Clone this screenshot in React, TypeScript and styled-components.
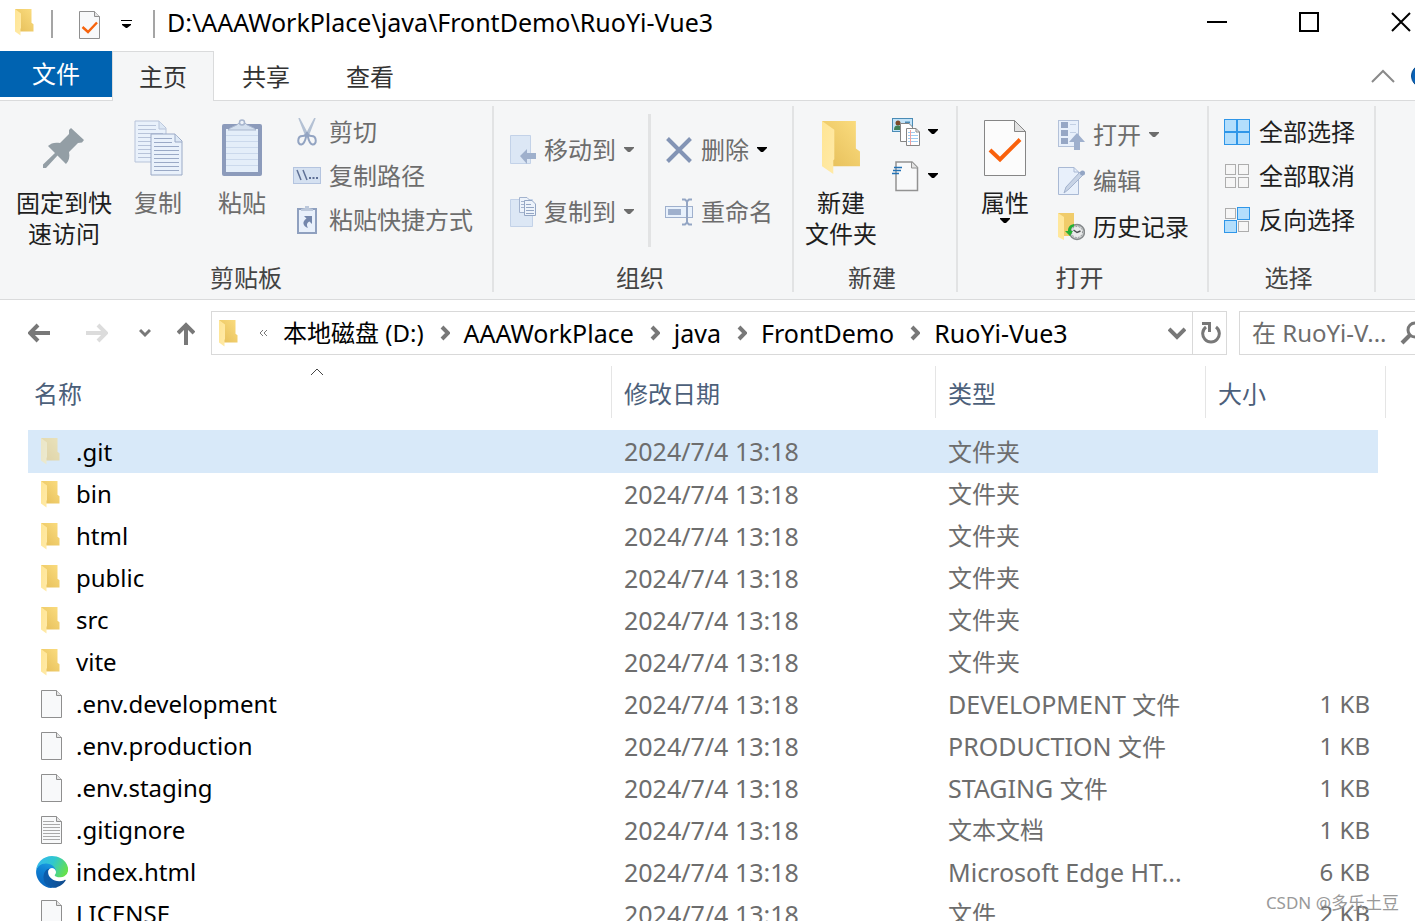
import React from 'react';
import styled, { createGlobalStyle } from 'styled-components';

const GlobalStyle = createGlobalStyle`
  * { box-sizing: border-box; }
  body {
    margin: 0;
    background: #fff;
    color: #000;
    font: 24px/32px 'Noto Sans', 'Noto Sans CJK SC', sans-serif;
  }
  button, input { font: inherit; color: inherit; }
`;

const Viewport = styled.div`
  position: relative;
  height: 100vh;
  overflow: hidden;
`;

/* The window runs a little past the right edge of the screen. */
const Window = styled.div`
  display: flex;
  flex-direction: column;
  margin-right: -32px;
`;

const PlainButton = styled.button`
  display: flex;
  align-items: center;
  padding: 0;
  border: 0;
  background: none;
  white-space: nowrap;
`;

/* Latin words are set one size larger than the Chinese text. */
const Latin = styled.span`
  font-size: 25px;
  line-height: 32px;
  white-space: pre;
`;

/* ---------- title bar ---------- */
const TitleBar = styled.header`
  display: flex;
  align-items: center;
  height: 51px;
  padding: 0 0 7px 15px;
`;
const TitleRule = styled.span`
  width: 2px;
  height: 28px;
  margin: 4px 12px 0 17px;
  background: #a5a5a5;
`;
const QuickButton = styled(PlainButton)`
  margin: 6px 0 0 14px;
`;
const QuickMenu = styled(PlainButton)`
  margin: 5px 4px 0 20px;
`;
const Title = styled.h1`
  flex: 1;
  margin: 0;
  font-size: 25px;
  font-weight: 400;
`;
const WindowButton = styled(PlainButton)`
  justify-content: center;
  width: 92px;
  height: 44px;
`;

/* ---------- tabs ---------- */
const TabBar = styled.nav`
  display: flex;
  height: 50px;
  border-bottom: 1px solid #dadbdc;
`;
const FileTab = styled(PlainButton)`
  justify-content: center;
  width: 112px;
  height: 46px;
  background: #0063b1;
  color: #fff;
`;
const Tab = styled(PlainButton)<{ $active?: boolean }>`
  justify-content: center;
  width: ${(p) => (p.$active ? 102 : 104)}px;
  height: 50px;
  border: solid ${(p) => (p.$active ? '#dadbdc' : 'transparent')};
  border-width: 1px 1px 0;
  background: ${(p) => (p.$active ? '#f5f6f7' : 'none')};
  color: #333;
`;
const TabTools = styled.div`
  display: flex;
  align-items: center;
  gap: 16px;
  margin-left: auto;
  padding-right: 12px;
`;

/* ---------- ribbon ---------- */
const Ribbon = styled.section`
  display: flex;
  height: 199px;
  padding: 5px 0 7px 6px;
  background: #f5f6f7;
  border-bottom: 1px solid #dadbdc;
`;
const Group = styled.div<{ $width: number }>`
  display: grid;
  grid-template-rows: 1fr 28px;
  width: ${(p) => p.$width}px;
  border-right: 2px solid #e2e3e4;
`;
const GroupBody = styled.div`
  display: flex;
  align-items: flex-start;
`;
const GroupLabel = styled.div`
  padding-right: 6px;
  line-height: 28px;
  text-align: center;
  color: #444;
`;
const LargeButton = styled(PlainButton)<{ $width: number; $muted?: boolean }>`
  flex-direction: column;
  width: ${(p) => p.$width}px;
  padding-top: 14px;
  line-height: 31px;
  color: ${(p) => (p.$muted ? '#6d6d6d' : '#1e1e1e')};
`;
const LargeIcon = styled.span`
  display: flex;
  align-items: center;
  justify-content: center;
  height: 56px;
  margin-bottom: 11px;
`;
const Column = styled.div<{ $left: number; $top: number }>`
  display: flex;
  flex-direction: column;
  padding: ${(p) => p.$top}px 0 0 ${(p) => p.$left}px;
`;
const SmallButton = styled(PlainButton)<{ $height: number; $muted?: boolean }>`
  gap: 8px;
  height: ${(p) => p.$height}px;
  color: ${(p) => (p.$muted ? '#6d6d6d' : '#1e1e1e')};
`;
const SmallIcon = styled.span`
  display: flex;
  align-items: center;
  justify-content: center;
  width: 28px;
`;
const InnerRule = styled.span`
  width: 3px;
  height: 133px;
  margin: 8px 0 0 14px;
  background: #e2e3e4;
`;

/* ---------- address row ---------- */
const AddressRow = styled.div`
  display: flex;
  align-items: center;
  padding: 11px 0 11px 28px;
`;
const NavButtons = styled.div`
  display: flex;
  align-items: center;
  width: 183px;
`;
const NavButton = styled(PlainButton)<{ $gap: number }>`
  margin-right: ${(p) => p.$gap}px;
`;
const AddressBox = styled.div`
  display: flex;
  flex: 1;
  align-items: center;
  height: 44px;
  padding-left: 7px;
  border: 1px solid #d9d9d9;
`;
const Overflow = styled(PlainButton)`
  margin: 0 15px 0 21px;
`;
const Crumb = styled(PlainButton)`
  color: #000;
`;
const CrumbArrow = styled.span`
  display: flex;
  margin: 0 14px 0 16px;
`;
const DropButton = styled(PlainButton)`
  margin: 0 6px 0 auto;
`;
const Refresh = styled(PlainButton)`
  justify-content: center;
  width: 34px;
  height: 42px;
  padding-left: 2px;
  border-left: 1px solid #d9d9d9;
`;
const SearchBox = styled.label`
  display: flex;
  align-items: center;
  width: 208px;
  height: 44px;
  margin-left: 12px;
  padding-left: 12px;
  border: 1px solid #d9d9d9;
  color: #6d6d6d;
`;
const SearchInput = styled.input`
  width: 148px;
  padding: 0;
  border: 0;
  outline: 0;
  background: none;
  &::placeholder { color: #6d6d6d; opacity: 1; }
`;

/* ---------- file list ---------- */
const FileTable = styled.table`
  table-layout: fixed;
  width: 1358px;
  margin-left: 28px;
  border-spacing: 0;
  tbody::before { content: ''; display: block; height: 12px; }
`;
const HeadCell = styled.th<{ $left: number }>`
  position: relative;
  height: 52px;
  padding: 3px 0 0 ${(p) => p.$left}px;
  border-right: 1px solid #e5e5e5;
  color: #4c607a;
  font-weight: 400;
  text-align: left;
`;
const SortMark = styled.span`
  position: absolute;
  top: 2px;
  left: 50%;
  display: flex;
  margin-left: -10px;
`;
const Row = styled.tr<{ $selected?: boolean }>`
  height: ${(p) => (p.$selected ? 43 : 42)}px;
  td { background: ${(p) => (p.$selected ? '#d8e9f9' : 'none')}; background-clip: padding-box; }
`;
const Cell = styled.td`
  padding: 0 0 0 12px;
  color: #6d6d6d;
  white-space: nowrap;
`;
const SizeCell = styled(Cell)`
  padding-right: 8px;
  border-right: 8px solid transparent;
  text-align: right;
`;
const NameCell = styled(Cell)`
  padding-left: 8px;
  color: #000;
`;
const FileName = styled.div`
  display: flex;
  align-items: center;
  gap: 8px;
`;
const FileIcon = styled.span<{ $faded?: boolean }>`
  display: flex;
  width: 32px;
  height: 32px;
  align-items: center;
  opacity: ${(p) => (p.$faded ? 0.5 : 1)};
`;
const IconInset = styled.span`
  display: flex;
  margin-left: 5px;
`;
const Watermark = styled.div`
  position: absolute;
  right: 16px;
  bottom: 6px;
  font-size: 17px;
  line-height: 24px;
  color: #999;
`;

/* ---------- drawings ---------- */
const Folder = ({ w, h }: { w: number; h: number }) => (
  <svg width={w} height={h} viewBox="0 0 38 55" preserveAspectRatio="none">
    <defs>
      <linearGradient id="folderBack" x1="0" y1="1" x2="1" y2="0">
        <stop offset="0.2" stopColor="#e9c35f" />
        <stop offset="1" stopColor="#fbdd80" />
      </linearGradient>
      <linearGradient id="folderFlap" x1="0" y1="0" x2="1" y2="1">
        <stop offset="0" stopColor="#ffe594" />
        <stop offset="1" stopColor="#ffeaa8" />
      </linearGradient>
    </defs>
    <path d="M0 0H33V28L37 31V46H8Z" fill="url(#folderBack)" />
    <path d="M0 0L12 9V39L11 40V54L0 46Z" fill="url(#folderFlap)" />
  </svg>
);

const Page = ({ check, lines }: { check?: boolean; lines?: boolean }) => (
  <svg width="22" height="29" viewBox="0 0 22 29" fill="none">
    <path d="M.5 .5H15.500L20.500 5.500V27.500H.5Z" fill="#f8f9fa" stroke="#8f8f8f" />
    <path d="M15.500 .5V5.500H20.500" fill="#e4e4e4" stroke="#8f8f8f" />
    {check && <path d="M3.500 16L9 21L18 11.500" stroke="#f7630c" strokeWidth="2.400" />}
    {lines && <path d="M2 5.500H13M2 8.500H19M2 11.500H19M2 14.500H19M2 17.500H19M2 20.500H19M2 23.500H19" stroke="#a9a9a9" />}
  </svg>
);

const Edge = () => (
  <svg width="32" height="32" viewBox="0 0 256 256">
    <defs>
      <linearGradient id="edgeDark" x1="0.2" y1="0.6" x2="1" y2="0.7">
        <stop offset="0" stopColor="#0c5cab" />
        <stop offset="1" stopColor="#114a8b" />
      </linearGradient>
      <linearGradient id="edgeBlue" x1="0.6" y1="0" x2="0.3" y2="1">
        <stop offset="0" stopColor="#1b9de2" />
        <stop offset="0.4" stopColor="#0e7fd2" />
        <stop offset="1" stopColor="#0a63bd" />
      </linearGradient>
      <linearGradient id="edgeGreen" x1="0" y1="0.2" x2="1" y2="0.55">
        <stop offset="0" stopColor="#35b8f0" />
        <stop offset="0.5" stopColor="#30c7cf" />
        <stop offset="1" stopColor="#66e14c" />
      </linearGradient>
    </defs>
    <g transform="translate(-4 -5)">
      <path fill="url(#edgeBlue)" d="M110.300 246.300A79.200 79.200 0 0 1 87.600 225a80.700 80.700 0 0 1 29.500-120c3.100-1.500 8.400-4.100 15.500-4a32.400 32.400 0 0 1 25.700 13 31.900 31.900 0 0 1 6.300 18.700c0-.2 24.500-79.600-80-79.600-43.900 0-80 41.700-80 78.200 0 19.300 4.500 38.500 13.100 56.100a128 128 0 0 0 156.400 67 75.500 75.500 0 0 1-62.800-8z" />
      <path fill="url(#edgeDark)" d="M235.700 195.500c-3.400 1.800-6.900 3.400-10.500 4.700a101.600 101.600 0 0 1-35.900 6.400c-47.300 0-88.500-32.500-88.500-74.300 0-11.400 6.400-21.900 16.500-27.300-42.800 1.800-53.800 46.400-53.800 72.500 0 74 68.100 81.400 82.800 81.400 7.900 0 19.800-2.300 27-4.600l1.300-.4a128.300 128.300 0 0 0 66.600-52.800 4 4 0 0 0-5.500-5.600z" />
      <path fill="url(#edgeGreen)" d="M156.900 153.800c-.8 1-3.300 2.500-3.300 5.700 0 2.600 1.700 5.100 4.700 7.200 14.500 10.100 41.800 8.800 41.900 8.800 10.700 0 21.200-2.900 30.500-8.300a61.800 61.800 0 0 0 30.400-53.200c.3-22.400-8-37.300-11.300-43.900C228.800 28.700 182.300 5 131.700 5a128 128 0 0 0-128 126.200c.5-36.500 36.800-66 80-66 3.500 0 23.500.3 42 10.100 16.300 8.600 24.900 18.900 30.800 29.200 6.200 10.700 7.300 24.100 7.300 29.500s-2.800 13.300-6.900 19.800z" />
    </g>
  </svg>
);

const Arrow = ({ color = '#000' }: { color?: string }) => (
  <svg width="10" height="6" viewBox="0 0 10 6"><path d="M0 0H10V1L6 5H4L0 1Z" fill={color} /></svg>
);

const Pin = () => (
  <svg width="42" height="42" viewBox="0 0 42 42">
    <path d="M28 1L41 13L39 15.500L35 16L26 25C27 30 26 34 23 37L14.500 28.500L3 41H0V37.500L12 26L5 19C8 16 12 15 17 16L26 7L26 3Z" fill="#939ea5" />
  </svg>
);

const CopyPages = () => (
  <svg width="50" height="56" viewBox="-1 0 50 56" fill="none">
    <g stroke="#b7c3d9">
      <path d="M1 1H25L32 8V42H1Z" fill="#e9f1fb" />
      <path d="M25 1V9H32" fill="#dde8f5" />
      <path d="M4 5.500H22M4 9.500H22M4 13.500H29M4 17.500H29M4 21.500H29M4 25.500H29M4 29.500H29M4 33.500H29M4 37.500H29" />
    </g>
    <g stroke="#9aa9c6">
      <path d="M17 14H41L48 21V55H17Z" fill="#e9f1fb" />
      <path d="M41 14V22H48" fill="#dde8f5" />
      <path d="M20 18.500H38M20 22.500H38M20 26.500H45M20 30.500H45M20 34.500H45M20 38.500H45M20 42.500H45M20 46.500H45M20 50.500H45" />
    </g>
  </svg>
);

const Clipboard = () => (
  <svg width="40" height="58" viewBox="0 0 40 58" fill="none">
    <rect y="5" width="40" height="52" rx="2" fill="#8c9bbb" />
    <path d="M4 10H36V53H4Z" fill="#e4eef9" />
    <path d="M4 16.500H36M4 22.500H36M4 28.500H36M4 34.500H36M4 40.500H36M4 46.500H36" stroke="#cbd9ec" />
    <path d="M6 11C8 8 15 7 17 4H23C25 7 32 8 34 11Z" fill="#d3dfee" stroke="#a8b6ce" />
    <circle cx="20" cy="3.500" r="2.500" fill="#eef3f9" stroke="#a8b6ce" strokeWidth="1.500" />
  </svg>
);

const Scissors = () => (
  <svg width="20" height="28" viewBox="0 0 20 28" fill="none">
    <path d="M2 0L11 17L9 18ZM18 0L9 17L11 18Z" fill="#b4c1d4" stroke="#b4c1d4" strokeWidth="1.500" />
    <path d="M10 15C9 18 8.500 26 4.500 26.500C0 27 0 18 5.500 18C8 18 10 16 10 14C10 16 12 18 14.500 18C20 18 20 27 15.500 26.500C11.500 26 11 18 10 15" stroke="#93a4c2" strokeWidth="2" />
  </svg>
);

const PathIcon = () => (
  <svg width="28" height="18" viewBox="0 0 28 18" fill="none">
    <rect x="0.500" y="0.500" width="27" height="16" fill="#d5e1f1" stroke="#b4c4df" />
    <path d="M4 3L8 13M10 3L14 13" stroke="#5f7095" strokeWidth="1.500" />
    <path d="M16 11H18M19.500 11H21.500M23 11H25" stroke="#5f7095" strokeWidth="2" />
  </svg>
);

const PasteLink = () => (
  <svg width="20" height="30" viewBox="0 0 20 30" fill="none">
    <rect x="1" y="4" width="18" height="24" fill="#e8f0fb" stroke="#8fa0bf" strokeWidth="2" />
    <path d="M4 6V4L8 3V1H12V3L16 4V6Z" fill="#bcc8db" />
    <path d="M7 11H15V19L12.500 16.500C9.500 18 9.500 20 11 23C6 21 4.500 17 9.500 13.500Z" fill="#7487ac" />
  </svg>
);

const MoveTo = () => (
  <svg width="28" height="30" viewBox="-1 0 28 30" fill="none">
    <path d="M1.500 .5H21.500V28.500H1.500Z" fill="#dce7f5" stroke="#c3d2e8" />
    <path d="M18 14V18H27V24H18V29L11 21Z" fill="#9fb0cc" />
  </svg>
);

const CopyTo = () => (
  <svg width="28" height="30" viewBox="-1 0 28 30" fill="none">
    <path d="M1.500 2.500H23.500V29.500H1.500Z" fill="#dce7f5" stroke="#c3d2e8" />
    <path d="M10.500 .5H18L21 3.500V15.500H10.500Z" fill="#edf3fb" stroke="#a3b3ce" />
    <path d="M12 4.500H17M12 7.500H16M12 10.500H16" stroke="#a3b3ce" />
    <path d="M15.500 3.500H23L26.500 7V18.500H15.500Z" fill="#edf3fb" stroke="#94a6c4" />
    <path d="M17 7.500H22M17 10.500H25M17 13.500H25M17 16.500H25" stroke="#94a6c4" />
  </svg>
);

const Cross = () => (
  <svg width="26" height="26" viewBox="0 0 26 26"><path d="M1.500 1.500L24.500 24.500M24.500 1.500L1.500 24.500" stroke="#8394b5" strokeWidth="4" /></svg>
);

const Rename = () => (
  <svg width="28" height="28" viewBox="0 0 28 28" fill="none">
    <rect x="0.500" y="8.500" width="27" height="11" fill="#e8f1fc" stroke="#9fb0cd" />
    <rect x="3" y="11" width="13" height="6" fill="#9fb0cd" />
    <path d="M17 1.500H20L22 3.500L24 1.500H27M22 3V25M17 26.500H20L22 24.500L24 26.500H27" stroke="#93a5c4" strokeWidth="2" />
  </svg>
);

const NewItem = () => (
  <svg width="28" height="29" viewBox="0 0 28 29" fill="none">
    <rect x="0.500" y="0.500" width="20" height="13" fill="#c3e3f8" stroke="#4a8bb5" />
    <circle cx="6" cy="5" r="2.500" fill="#7c4a2a" />
    <path d="M2 12C2 8 4 7.500 6 7.500S10 8 10 12Z" fill="#3f7f58" />
    <path d="M13 4.500H18" stroke="#4a8bb5" strokeWidth="2" />
    <path d="M8.500 5.500H17L20.500 9V23.500H8.500Z" fill="#fff" stroke="#858585" />
    <path d="M14.500 10.500H24L27.500 14V27.500H14.500Z" fill="#fff" stroke="#858585" />
    <path d="M24 10.500V14H27.500" stroke="#858585" />
    <path d="M16 14.500H23M16 17.500H26M16 20.500H26M16 23.500H26" stroke="#9ecbf0" />
    <path d="M18.500 12V27" stroke="#f0a0a0" />
  </svg>
);

const EasyAccess = () => (
  <svg width="28" height="31" viewBox="1 0 28 31" fill="none">
    <path d="M5 1H21L26.500 6.500V29.500H5Z" fill="#f8f9fa" stroke="#929292" strokeWidth="1.500" />
    <path d="M20.500 1V7H26.500" fill="#e4e4e4" stroke="#929292" />
    <path d="M3 6.500H11M2 9.500H10M1 12.500H8" stroke="#2272b5" strokeWidth="1.500" />
  </svg>
);

const Properties = () => (
  <svg width="42" height="56" viewBox="0 0 42 56" fill="none">
    <path d="M.5 .5H30.500L41.500 11.500V55.500H.5Z" fill="#fcfcfc" stroke="#868686" />
    <path d="M30.500 .5V11.500H41.500Z" fill="#e2e2e2" stroke="#868686" />
    <path d="M6 30L16 39.500L36 19.500" stroke="#f9610c" strokeWidth="4" />
  </svg>
);

const OpenIcon = () => (
  <svg width="28" height="30" viewBox="0 0 28 30" fill="none">
    <rect x="1.500" y="0.500" width="20" height="26" fill="#e8f0fb" stroke="#b3c1d9" />
    <path d="M4 2H11V8H4ZM4 10H11V16H4ZM4 18H11V24H4Z" fill="#96a7c5" />
    <path d="M13 4.500H19M13 12.500H19" stroke="#c3d0e4" />
    <path d="M20 13L28 22H23V30H17V22H12Z" fill="#9fb0cd" />
  </svg>
);

const EditIcon = () => (
  <svg width="28" height="28" viewBox="0 0 28 28" fill="none">
    <path d="M1.500 .5H17L21.500 5V27.500H1.500Z" fill="#e8f0fb" stroke="#a9b9d4" />
    <path d="M17 .5V5H21.500" stroke="#a9b9d4" />
    <path d="M7 26L9 20L23 5L26 8L12 22Z" fill="#c7d3e5" stroke="#a3b3ce" />
    <circle cx="25.500" cy="6" r="2.500" fill="#93a5c4" />
  </svg>
);

const History = () => (
  <svg width="28" height="28" viewBox="0 0 28 28" fill="none">
    <path d="M1 0H17V23H5Z" fill="#f0cc6b" />
    <path d="M1 0L7 4V27L1 24Z" fill="#ffe79c" />
    <circle cx="20" cy="19" r="7.500" fill="#c9cccd" stroke="#85898b" strokeWidth="1.500" />
    <circle cx="20" cy="19" r="5.500" fill="#e9eaeb" stroke="#777b7d" strokeDasharray="1 2" />
    <path d="M16.500 17L20 19.500L23.500 18" stroke="#4c4f51" strokeWidth="1.500" />
    <path d="M17 11C12 12 11 15 11 18H8L13 23L16 18H14C14 15 15 14 17 13.500Z" fill="#25b035" />
  </svg>
);

const SelectIcon = ({ on }: { on: boolean[] }) => (
  <svg width="26" height="26" viewBox="0 0 26 26">
    {on.map((active, i) => {
      const x = (i % 2) * 13;
      const y = Math.floor(i / 2) * 13;
      return active ? (
        <rect key={i} x={x + 0.5} y={y + 0.5} width="12" height="12" fill="#b3defc" stroke="#2f96e8" />
      ) : (
        <rect key={i} x={x + 1.5} y={y + 1.5} width="10" height="10" fill="#f6f6f6" stroke="#adadad" />
      );
    })}
  </svg>
);

const Stroke = ({ w, h, d, color = '#787878', weight = 3 }: { w: number; h: number; d: string; color?: string; weight?: number }) => (
  <svg width={w} height={h} viewBox={`0 0 ${w} ${h}`} fill="none"><path d={d} stroke={color} strokeWidth={weight} /></svg>
);

/* ---------- data ---------- */
type Kind = 'folder' | 'page' | 'text' | 'edge';
const files: { name: string; kind: Kind; latin?: string; type?: string; size?: string; hidden?: boolean }[] = [
  { name: '.git', kind: 'folder', type: '文件夹', hidden: true },
  { name: 'bin', kind: 'folder', type: '文件夹' },
  { name: 'html', kind: 'folder', type: '文件夹' },
  { name: 'public', kind: 'folder', type: '文件夹' },
  { name: 'src', kind: 'folder', type: '文件夹' },
  { name: 'vite', kind: 'folder', type: '文件夹' },
  { name: '.env.development', kind: 'page', latin: 'DEVELOPMENT ', type: '文件', size: '1 KB' },
  { name: '.env.production', kind: 'page', latin: 'PRODUCTION ', type: '文件', size: '1 KB' },
  { name: '.env.staging', kind: 'page', latin: 'STAGING ', type: '文件', size: '1 KB' },
  { name: '.gitignore', kind: 'text', type: '文本文档', size: '1 KB' },
  { name: 'index.html', kind: 'edge', latin: 'Microsoft Edge HT...', size: '6 KB' },
  { name: 'LICENSE', kind: 'page', type: '文件', size: '2 KB' },
];
const crumbs = ['AAAWorkPlace', 'java', 'FrontDemo', 'RuoYi-Vue3'];

const KindIcon = ({ kind }: { kind: Kind }) => {
  if (kind === 'edge') return <Edge />;
  return <IconInset>{kind === 'folder' ? <Folder w={19} h={27} /> : <Page lines={kind === 'text'} />}</IconInset>;
};

type SmallProps = { icon: React.ReactNode; label?: string; name?: string; height?: number; muted?: boolean; arrow?: string };
const Small = ({ icon, label, name, height = 44, muted, arrow }: SmallProps) => (
  <SmallButton type="button" aria-label={name} $height={height} $muted={muted}>
    <SmallIcon>{icon}</SmallIcon>
    {label && <span>{label}</span>}
    {arrow && <Arrow color={arrow} />}
  </SmallButton>
);

export default function App() {
  return (
    <Viewport>
      <GlobalStyle />
      <Window>
        <TitleBar>
          <Folder w={19} h={27} />
          <TitleRule />
          <QuickButton type="button" aria-label="属性"><Page check /></QuickButton>
          <QuickMenu type="button" aria-label="自定义快速访问工具栏">
            <svg width="11" height="9" viewBox="0 0 11 9"><path d="M0 0H11V1H0ZM1 4H10V5L6 8H5L1 5Z" /></svg>
          </QuickMenu>
          <TitleRule />
          <Title>D:\AAAWorkPlace\java\FrontDemo\RuoYi-Vue3</Title>
          <WindowButton type="button" aria-label="最小化"><Stroke w={20} h={20} d="M0 10H20" color="#000" weight={2} /></WindowButton>
          <WindowButton type="button" aria-label="最大化"><Stroke w={20} h={20} d="M1 1H19V19H1Z" color="#000" weight={2} /></WindowButton>
          <WindowButton type="button" aria-label="关闭"><Stroke w={20} h={20} d="M1 1L19 19M19 1L1 19" color="#000" weight={2} /></WindowButton>
        </TitleBar>

        <TabBar>
          <FileTab type="button">文件</FileTab>
          <Tab type="button" $active>主页</Tab>
          <Tab type="button">共享</Tab>
          <Tab type="button">查看</Tab>
          <TabTools>
            <PlainButton type="button" aria-label="折叠功能区"><Stroke w={24} h={14} d="M1 13L12 2L23 13" color="#8a8a8a" weight={2} /></PlainButton>
            <PlainButton type="button" aria-label="帮助">
              <svg width="24" height="24" viewBox="0 0 24 24"><circle cx="12" cy="12" r="11.500" fill="#0a63b8" stroke="#0b4c8c" /></svg>
            </PlainButton>
          </TabTools>
        </TabBar>

        <Ribbon>
          <Group $width={488}>
            <GroupBody>
              <LargeButton type="button" $width={116}><LargeIcon><Pin /></LargeIcon><span>固定到快<br />速访问</span></LargeButton>
              <LargeButton type="button" $width={72} $muted><LargeIcon><CopyPages /></LargeIcon>复制</LargeButton>
              <LargeButton type="button" $width={96} $muted><LargeIcon><Clipboard /></LargeIcon>粘贴</LargeButton>
              <Column $left={3} $top={4}>
                <Small icon={<Scissors />} label="剪切" muted />
                <Small icon={<PathIcon />} label="复制路径" muted />
                <Small icon={<PasteLink />} label="粘贴快捷方式" muted />
              </Column>
            </GroupBody>
            <GroupLabel>剪贴板</GroupLabel>
          </Group>
          <Group $width={300}>
            <GroupBody>
              <Column $left={14} $top={13}>
                <Small icon={<MoveTo />} label="移动到" height={62} muted arrow="#6d6d6d" />
                <Small icon={<CopyTo />} label="复制到" height={62} muted arrow="#6d6d6d" />
              </Column>
              <InnerRule />
              <Column $left={14} $top={13}>
                <Small icon={<Cross />} label="删除" height={62} muted arrow="#000" />
                <Small icon={<Rename />} label="重命名" height={62} muted />
              </Column>
            </GroupBody>
            <GroupLabel>组织</GroupLabel>
          </Group>
          <Group $width={164}>
            <GroupBody>
              <LargeButton type="button" $width={94}><LargeIcon><Folder w={39} h={54} /></LargeIcon><span>新建<br />文件夹</span></LargeButton>
              <Column $left={4} $top={4}>
                <Small icon={<NewItem />} name="新建项目" arrow="#000" />
                <Small icon={<EasyAccess />} name="轻松访问" arrow="#000" />
              </Column>
            </GroupBody>
            <GroupLabel>新建</GroupLabel>
          </Group>
          <Group $width={251}>
            <GroupBody>
              <LargeButton type="button" $width={94}><LargeIcon><Properties /></LargeIcon>属性<Arrow /></LargeButton>
              <Column $left={5} $top={6}>
                <Small icon={<OpenIcon />} label="打开" height={46} muted arrow="#6d6d6d" />
                <Small icon={<EditIcon />} label="编辑" height={46} muted />
                <Small icon={<History />} label="历史记录" height={46} />
              </Column>
            </GroupBody>
            <GroupLabel>打开</GroupLabel>
          </Group>
          <Group $width={167}>
            <GroupBody>
              <Column $left={14} $top={4}>
                <Small icon={<SelectIcon on={[true, true, true, true]} />} label="全部选择" />
                <Small icon={<SelectIcon on={[false, false, false, false]} />} label="全部取消" />
                <Small icon={<SelectIcon on={[false, true, true, false]} />} label="反向选择" />
              </Column>
            </GroupBody>
            <GroupLabel>选择</GroupLabel>
          </Group>
        </Ribbon>

        <AddressRow>
          <NavButtons>
            <NavButton type="button" aria-label="后退" $gap={36}><Stroke w={22} h={20} d="M22 10H2M10 2L2 10L10 18" weight={4} /></NavButton>
            <NavButton type="button" aria-label="前进" $gap={31}><Stroke w={22} h={20} d="M0 10H20M12 2L20 10L12 18" color="#dcdcdc" weight={4} /></NavButton>
            <NavButton type="button" aria-label="最近浏览的位置" $gap={26}><Stroke w={12} h={10} d="M1 2L6 7L11 2" /></NavButton>
            <NavButton type="button" aria-label="上移" $gap={0}><Stroke w={18} h={24} d="M9 24V4M1 12L9 4L17 12" weight={4} /></NavButton>
          </NavButtons>
          <AddressBox>
            <Folder w={19} h={27} />
            <Overflow type="button" aria-label="更多"><Stroke w={9} h={6} d="M4 0L1 3L4 6M8 0L5 3L8 6" weight={1} /></Overflow>
            <Crumb type="button">本地磁盘 (D:)</Crumb>
            {crumbs.map((crumb) => (
              <React.Fragment key={crumb}>
                <CrumbArrow><Stroke w={10} h={16} d="M2 2L8 8L2 14" weight={4} /></CrumbArrow>
                <Crumb type="button"><Latin>{crumb}</Latin></Crumb>
              </React.Fragment>
            ))}
            <DropButton type="button" aria-label="以前的位置"><Stroke w={18} h={14} d="M1 3L9 11L17 3" weight={4} /></DropButton>
            <Refresh type="button" aria-label="刷新">
              <svg width="20" height="22" viewBox="0 0 20 22" fill="none">
                <path d="M15 5A8.300 8.300 0 1 1 5 5" stroke="#787878" strokeWidth="3" />
                <path d="M1 0H10V10H7V3H1Z" fill="#787878" />
              </svg>
            </Refresh>
          </AddressBox>
          <SearchBox>
            <SearchInput aria-label="搜索" placeholder="在 RuoYi-V..." />
            <svg width="24" height="24" viewBox="0 0 24 24" fill="none">
              <circle cx="15" cy="9" r="7" stroke="#787878" strokeWidth="3" />
              <path d="M10 14L2 22" stroke="#787878" strokeWidth="4" />
            </svg>
          </SearchBox>
        </AddressRow>

        <FileTable>
          <colgroup>
            <col width="584" />
            <col width="324" />
            <col width="270" />
            <col width="180" />
          </colgroup>
          <thead>
            <tr>
              <HeadCell $left={6}>名称<SortMark><Stroke w={14} h={8} d="M1 7L7 1L13 7" color="#444" weight={1} /></SortMark></HeadCell>
              <HeadCell $left={12}>修改日期</HeadCell>
              <HeadCell $left={12}>类型</HeadCell>
              <HeadCell $left={12}>大小</HeadCell>
            </tr>
          </thead>
          <tbody>
            {files.map((file) => (
              <Row key={file.name} $selected={file.hidden}>
                <NameCell>
                  <FileName>
                    <FileIcon $faded={file.hidden}><KindIcon kind={file.kind} /></FileIcon>
                    {file.name}
                  </FileName>
                </NameCell>
                <Cell><Latin>2024/7/4 13:18</Latin></Cell>
                <Cell>{file.latin && <Latin>{file.latin}</Latin>}{file.type}</Cell>
                <SizeCell>{file.size}</SizeCell>
              </Row>
            ))}
          </tbody>
        </FileTable>
      </Window>
      <Watermark>CSDN @多乐土豆</Watermark>
    </Viewport>
  );
}
